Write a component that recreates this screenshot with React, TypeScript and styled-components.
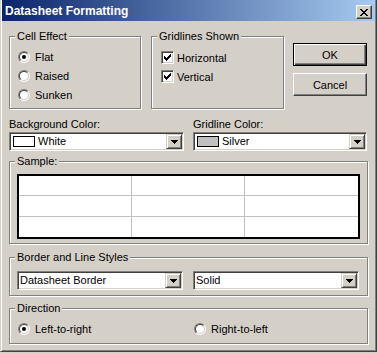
import React from "react";
import styled, { createGlobalStyle } from "styled-components";

const Global = createGlobalStyle`
  html, body { margin: 0; padding: 0; background: #D4D0C8; }
  body { font-family: "Liberation Sans", Arial, sans-serif; font-size: 11px; color: #000; }
  #root { width: 377px; height: 353px; }
`;

const Dialog = styled.div`
  box-sizing: border-box;
  width: 377px;
  height: 352px;
  background: #D4D0C8;
  border-style: solid;
  border-width: 0 1px 1px 1px;
  border-color: #404040;
  border-left-color: #D4D0C8;
  box-shadow: inset 1px 0 #fff, inset -1px -1px #808080;
  padding: 0 1px 1px 1px;
  display: flex;
  flex-direction: column;
`;

const TitleBar = styled.div`
  height: 21px;
  display: flex;
  align-items: flex-start;
  background: linear-gradient(to right, #0A246A, #A6CAF0);
  color: #fff;
  font-weight: bold;
  font-size: 12px;
`;

const TitleText = styled.div`
  flex: 1;
  line-height: 21px;
  padding: 1px 0 0 3px;
  white-space: nowrap;
`;

const CloseButton = styled.div`
  box-sizing: border-box;
  width: 16px;
  height: 14px;
  margin: 5px 3px 0 0;
  background: #D4D0C8;
  border: 1px solid;
  border-color: #fff #404040 #404040 #fff;
  box-shadow: inset -1px -1px #808080;
  display: flex;
  align-items: center;
  justify-content: center;
`;

const Body = styled.div`
  padding: 15px 7px 0 7px;
  display: flex;
  flex-direction: column;
`;

const TopRow = styled.div`
  display: flex;
  align-items: flex-start;
`;

const Group = styled.div<{ $w?: number; $h: number; $pt: number; $px: number; $ml?: number; $mt?: number }>`
  position: relative;
  box-sizing: border-box;
  width: ${(p) => (p.$w ? `${p.$w}px` : "auto")};
  height: ${(p) => p.$h}px;
  margin-left: ${(p) => p.$ml ?? 0}px;
  margin-top: ${(p) => p.$mt ?? 0}px;
  padding: ${(p) => p.$pt}px ${(p) => p.$px}px 0 ${(p) => p.$px}px;
  border: 1px solid #808080;
  box-shadow: inset 1px 1px #fff, 1px 1px #fff;
`;

const Caption = styled.span`
  position: absolute;
  top: -7px;
  left: 5px;
  padding: 0 2px;
  line-height: 13px;
  background: #D4D0C8;
  white-space: nowrap;
`;

const OptionRow = styled.div<{ $gap: number }>`
  display: flex;
  align-items: center;
  gap: ${(p) => p.$gap}px;
  height: 19px;
  white-space: nowrap;
`;

const RadioOuter = styled.span`
  box-sizing: border-box;
  width: 12px;
  height: 12px;
  border-radius: 50%;
  border: 1px solid;
  border-color: #808080 #fff #fff #808080;
  display: flex;
  flex-shrink: 0;
`;

const RadioInner = styled.span`
  flex: 1;
  border-radius: 50%;
  border: 1px solid;
  border-color: #404040 #D4D0C8 #D4D0C8 #404040;
  background: #fff;
  display: flex;
  align-items: center;
  justify-content: center;
`;

const RadioDot = styled.span`
  width: 4px;
  height: 4px;
  border-radius: 50%;
  background: #000;
`;

const CheckBox = styled.span`
  box-sizing: border-box;
  width: 13px;
  height: 13px;
  flex-shrink: 0;
  border: 1px solid;
  border-color: #808080 #fff #fff #808080;
  box-shadow: inset 1px 1px #404040, inset -1px -1px #D4D0C8;
  background: #fff;
  display: flex;
  align-items: center;
  justify-content: center;
`;

const ButtonCol = styled.div`
  display: flex;
  flex-direction: column;
  gap: 7px;
  margin-left: 9px;
  margin-top: 7px;
  width: 74px;
`;

const PushButton = styled.div<{ $default?: boolean }>`
  box-sizing: border-box;
  height: 23px;
  display: flex;
  align-items: center;
  justify-content: center;
  background: #D4D0C8;
  border: 1px solid;
  border-color: ${(p) => (p.$default ? "#000" : "#fff #404040 #404040 #fff")};
  box-shadow: ${(p) =>
    p.$default
      ? "inset 1px 1px #fff, inset -1px -1px #404040, inset -2px -2px #808080"
      : "inset -1px -1px #808080"};
`;

const ColorRow = styled.div`
  display: grid;
  grid-template-columns: 175px 174px;
  column-gap: 9px;
  margin-top: 9px;
`;

const Field = styled.div`
  display: flex;
  flex-direction: column;
`;

const Label = styled.div`
  line-height: 13px;
  margin-bottom: 1px;
  white-space: nowrap;
`;

const Combo = styled.div<{ $w?: number }>`
  box-sizing: border-box;
  width: ${(p) => (p.$w ? `${p.$w}px` : "auto")};
  height: 19px;
  display: flex;
  align-items: center;
  padding: 1px;
  background: #fff;
  border: 1px solid;
  border-color: #808080 #fff #fff #808080;
  box-shadow: inset 1px 1px #404040, inset -1px -1px #D4D0C8;
`;

const Swatch = styled.span<{ $color: string }>`
  box-sizing: border-box;
  width: 22px;
  height: 11px;
  margin-left: 2px;
  border: 1px solid #000;
  background: ${(p) => p.$color};
  flex-shrink: 0;
`;

const ComboText = styled.span<{ $pl: number }>`
  flex: 1;
  padding-left: ${(p) => p.$pl}px;
  line-height: 15px;
  white-space: nowrap;
  overflow: hidden;
`;

const DropButton = styled.span`
  box-sizing: border-box;
  width: 16px;
  height: 15px;
  flex-shrink: 0;
  background: #D4D0C8;
  border: 1px solid;
  border-color: #D4D0C8 #404040 #404040 #D4D0C8;
  box-shadow: inset 1px 1px #fff, inset -1px -1px #808080;
  display: flex;
  align-items: center;
  justify-content: center;
`;

const SampleTable = styled.div`
  box-sizing: border-box;
  height: 65px;
  background: #fff;
  border: 2px solid #000;
  display: grid;
  grid-template-columns: 1fr 1fr 1fr;
  grid-template-rows: 1fr 1fr 1fr;
`;

const Cell = styled.div`
  border-right: 1px solid #C0C0C0;
  border-bottom: 1px solid #C0C0C0;
  &:nth-child(3n) { border-right: none; }
  &:nth-child(n + 7) { border-bottom: none; }
`;

const ComboRow = styled.div`
  display: flex;
  gap: 10px;
`;

const DirectionRow = styled.div`
  display: grid;
  grid-template-columns: 176px 1fr;
`;

const pixels = (rows: string[]) =>
  rows.flatMap((r, y) =>
    r.split("").map((c, x) => (c === "x" ? <rect key={`${x}-${y}`} x={x} y={y} width={1} height={1} /> : null))
  );

const CheckMark = () => (
  <svg width="7" height="7" viewBox="0 0 7 7" shapeRendering="crispEdges" fill="#000">
    {pixels(["......x", ".....xx", "x...xxx", "xx.xxx.", "xxxxx..", ".xxx...", "..x...."])}
  </svg>
);

const CloseGlyph = () => (
  <svg width="8" height="7" viewBox="0 0 8 7" shapeRendering="crispEdges" fill="#000">
    {pixels(["xx....xx", ".xx..xx.", "..xxxx..", "...xx...", "..xxxx..", ".xx..xx.", "xx....xx"])}
  </svg>
);

const Arrow = () => (
  <svg width="7" height="4" viewBox="0 0 7 4" shapeRendering="crispEdges" fill="#000">
    {pixels(["xxxxxxx", ".xxxxx.", "..xxx..", "...x..."])}
  </svg>
);

const Radio = ({ checked, label }: { checked?: boolean; label: string }) => (
  <OptionRow $gap={5}>
    <RadioOuter>
      <RadioInner>{checked && <RadioDot />}</RadioInner>
    </RadioOuter>
    <span>{label}</span>
  </OptionRow>
);

const Check = ({ label }: { label: string }) => (
  <OptionRow $gap={3}>
    <CheckBox>
      <CheckMark />
    </CheckBox>
    <span>{label}</span>
  </OptionRow>
);

const ComboBox = ({ text, swatch, w }: { text: string; swatch?: string; w?: number }) => (
  <Combo $w={w}>
    {swatch && <Swatch $color={swatch} />}
    <ComboText $pl={swatch ? 3 : 1}>{text}</ComboText>
    <DropButton>
      <Arrow />
    </DropButton>
  </Combo>
);

export default function App() {
  return (
    <>
      <Global />
      <Dialog>
        <TitleBar>
          <TitleText>Datasheet Formatting</TitleText>
          <CloseButton>
            <CloseGlyph />
          </CloseButton>
        </TitleBar>
        <Body>
          <TopRow>
            <Group $w={132} $h={73} $pt={10} $px={8}>
              <Caption>Cell Effect</Caption>
              <Radio checked label="Flat" />
              <Radio label="Raised" />
              <Radio label="Sunken" />
            </Group>
            <Group $w={133} $h={73} $pt={11} $px={9} $ml={10}>
              <Caption>Gridlines Shown</Caption>
              <Check label="Horizontal" />
              <Check label="Vertical" />
            </Group>
            <ButtonCol>
              <PushButton $default>OK</PushButton>
              <PushButton>Cancel</PushButton>
            </ButtonCol>
          </TopRow>
          <ColorRow>
            <Field>
              <Label>Background Color:</Label>
              <ComboBox text="White" swatch="#fff" />
            </Field>
            <Field>
              <Label>Gridline Color:</Label>
              <ComboBox text="Silver" swatch="#C0C0C0" />
            </Field>
          </ColorRow>
          <Group $h={83} $pt={12} $px={7} $mt={10}>
            <Caption>Sample:</Caption>
            <SampleTable>
              {Array.from({ length: 9 }, (_, i) => (
                <Cell key={i} />
              ))}
            </SampleTable>
          </Group>
          <Group $h={39} $pt={13} $px={7} $mt={13}>
            <Caption>Border and Line Styles</Caption>
            <ComboRow>
              <ComboBox text="Datasheet Border" w={166} />
              <ComboBox text="Solid" w={166} />
            </ComboRow>
          </Group>
          <Group $h={36} $pt={10} $px={8} $mt={12}>
            <Caption>Direction</Caption>
            <DirectionRow>
              <Radio checked label="Left-to-right" />
              <Radio label="Right-to-left" />
            </DirectionRow>
          </Group>
        </Body>
      </Dialog>
    </>
  );
}
